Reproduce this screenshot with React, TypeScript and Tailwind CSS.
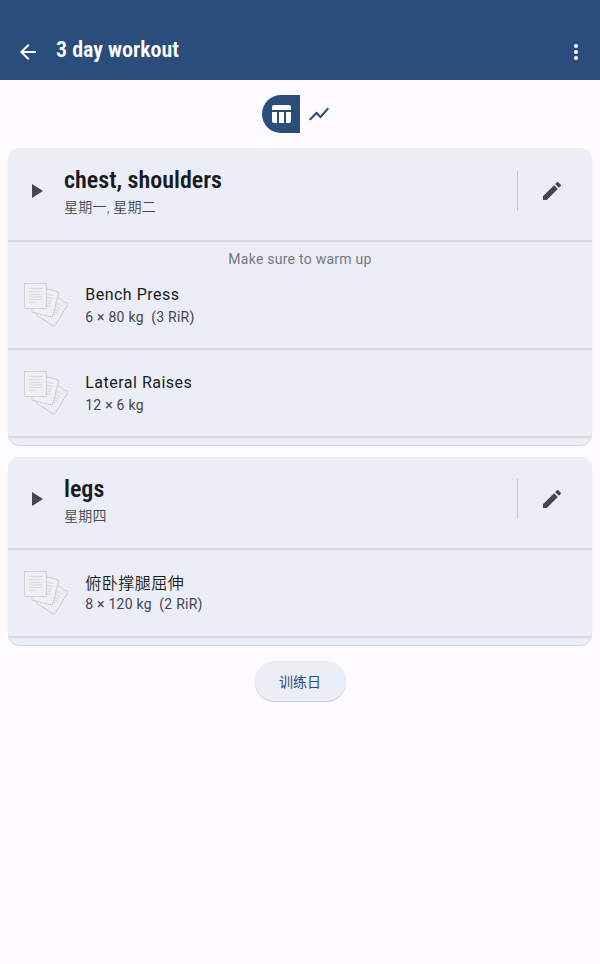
import React from "react";

const latin = "font-['Roboto','Noto_Sans_CJK_SC',sans-serif]";
const condensed =
  "font-['Roboto_Condensed','Roboto','Noto_Sans_CJK_SC',sans-serif] [font-stretch:75%]";

function Icon({ d, className = "" }: { d: string; className?: string }) {
  return (
    <svg viewBox="0 0 24 24" className={`size-6 shrink-0 fill-current ${className}`}>
      <path d={d} />
    </svg>
  );
}

const BACK = "M20 11H7.83l5.59-5.59L12 4l-8 8 8 8 1.41-1.41L7.83 13H20v-2z";
const MORE =
  "M12 8c1.1 0 2-.9 2-2s-.9-2-2-2-2 .9-2 2 .9 2 2 2zm0 2c-1.1 0-2 .9-2 2s.9 2 2 2 2-.9 2-2-.9-2-2-2zm0 6c-1.1 0-2 .9-2 2s.9 2 2 2 2-.9 2-2-.9-2-2-2z";
const TABLE =
  "M10 10.02h5V21h-5zM17 21h3c1.1 0 2-.9 2-2v-9h-5v11zm3-18H5c-1.1 0-2 .9-2 2v3h19V5c0-1.1-.9-2-2-2zM3 19c0 1.1.9 2 2 2h3V10H3v9z";
const CHART = "M3.5 18.49l6-6.01 4 4L22 6.92l-1.41-1.41-7.09 7.97-4-4L2 16.99z";
const PLAY = "M8 5v14l11-7z";
const EDIT =
  "M3 17.25V21h3.75L17.81 9.94l-3.75-3.75L3 17.25zM20.71 7.04a.996.996 0 0 0 0-1.41l-2.34-2.34a.996.996 0 0 0-1.41 0l-1.83 1.83 3.75 3.75 1.83-1.83z";

function Sheet({ transform, front }: { transform?: string; front?: boolean }) {
  return (
    <g transform={transform}>
      <rect x="0.5" y="0" width="22" height="25.5" rx="1.5" fill="#eeeff3" />
      {front ? (
        <>
          <rect x="0.5" y="0.5" width="22" height="25" rx="1.5" stroke="#d0d1d4" />
          <path d="M0 .5H2M21 .5H22.5" stroke="#c4c5c8" />
        </>
      ) : (
        <rect x="0.5" y="0.5" width="22" height="26" rx="1.5" fill="#eeeff3" stroke="#b4b5b8" strokeWidth="0.8" strokeDasharray="1.4 0.7" />
      )}
      <path d="M5 5.5H18M5 8.5H18M5 11.5H18M5 14H18M5 16.5H18M5 19.5H11" stroke="#d8d9dc" strokeWidth="0.9" />
    </g>
  );
}

function Papers() {
  return (
    <svg viewBox="0 0 45 45" className="size-[45px] shrink-0" fill="none">
      <Sheet transform="translate(44 21) rotate(31) translate(-22.5 -0.5)" />
      <Sheet transform="translate(34.9 9) rotate(14) translate(-22.5 -0.5)" />
      <Sheet front />
    </svg>
  );
}

type Exercise = { name: string; detail: string };

function ExerciseRow({ name, detail }: Exercise) {
  const cjk = /[\u4e00-\u9fff]/.test(name);
  return (
    <div className="flex h-[88px] items-start border-b-2 border-[#d5d8e1] pl-4 pt-[21px]">
      <Papers />
      <div className="ml-[16.2px]">
        <div
          className={`text-base leading-6 tracking-[0.5px] text-[#1a1b1f] ${
            cjk ? "h-[23px] pt-px font-[350]" : "h-6"
          }`}
        >
          {name}
        </div>
        <div className="whitespace-pre text-sm leading-5 tracking-[0.25px] text-[#44474e]">
          {detail}
        </div>
      </div>
    </div>
  );
}

function DayCard({ title, days, note, exercises }: {
  title: string;
  days: string;
  note?: string;
  exercises: Exercise[];
}) {
  return (
    <section className="overflow-hidden rounded-xl bg-[#ebeef6] pb-[7px] shadow-[0_1px_1px_rgba(0,0,0,0.17)]">
      <header
        className={`flex items-end border-b-2 border-[#d5d8e1] pl-4 ${note ? "h-[94px]" : "h-[93px]"}`}
      >
        <Icon d={PLAY} className="mb-[37px] text-[#44474e]" />
        <div className="ml-4 self-start pt-4">
          <h2 className={`${condensed} text-2xl font-semibold leading-8 text-[#1a1b1f]`}>{title}</h2>
          <p className="mt-px text-sm font-[350] leading-5 tracking-[0.25px] text-[#44474e]">{days}</p>
        </div>
        <div className="mb-[29px] ml-auto mr-[22px] h-10 w-px bg-[#c4c6d0]" />
        <Icon d={EDIT} className="mb-[37px] mr-7 text-[#44474e]" />
      </header>
      {note && (
        <p className="-mb-5 h-10 pt-[7px] text-center text-sm leading-5 tracking-[0.25px] text-[#75777f]">
          {note}
        </p>
      )}
      {exercises.map((e) => (
        <ExerciseRow key={e.name} {...e} />
      ))}
    </section>
  );
}

export default function App() {
  return (
    <div className={`${latin} h-[964px] w-[600px] overflow-hidden bg-[#fdfbff]`}>
      <div className="flex h-20 items-start bg-[#2a4d7c] px-4 pt-10 text-white">
        <Icon d={BACK} />
        <h1 className={`${condensed} -mt-1 ml-4 text-[22px] font-semibold leading-7`}>3 day workout</h1>
        <Icon d={MORE} className="-mr-1 ml-auto" />
      </div>
      <div className="flex justify-center pt-[15px] text-[#2a4d7c]">
        <div className="flex size-[38px] items-center justify-center rounded-l-full bg-[#2a4d7c] text-white">
          <Icon d={TABLE} />
        </div>
        <div className="flex size-[38px] items-center justify-center">
          <Icon d={CHART} />
        </div>
      </div>
      <main className="flex flex-col gap-3 px-2 pt-[15px]">
        <DayCard
          title="chest, shoulders"
          days="星期一, 星期二"
          note="Make sure to warm up"
          exercises={[
            { name: "Bench Press", detail: "6 × 80 kg  (3 RiR)" },
            { name: "Lateral Raises", detail: "12 × 6 kg" },
          ]}
        />
        <DayCard
          title="legs"
          days="星期四"
          exercises={[{ name: "俯卧撑腿屈伸", detail: "8 × 120 kg  (2 RiR)" }]}
        />
        <button className="mt-1 h-10 w-[91px] self-center rounded-full bg-[#ebeef6] pt-0.5 text-sm font-normal text-[#2a4d7c] shadow-[0_1px_1px_rgba(0,0,0,0.2)]">
          训练日
        </button>
      </main>
    </div>
  );
}
